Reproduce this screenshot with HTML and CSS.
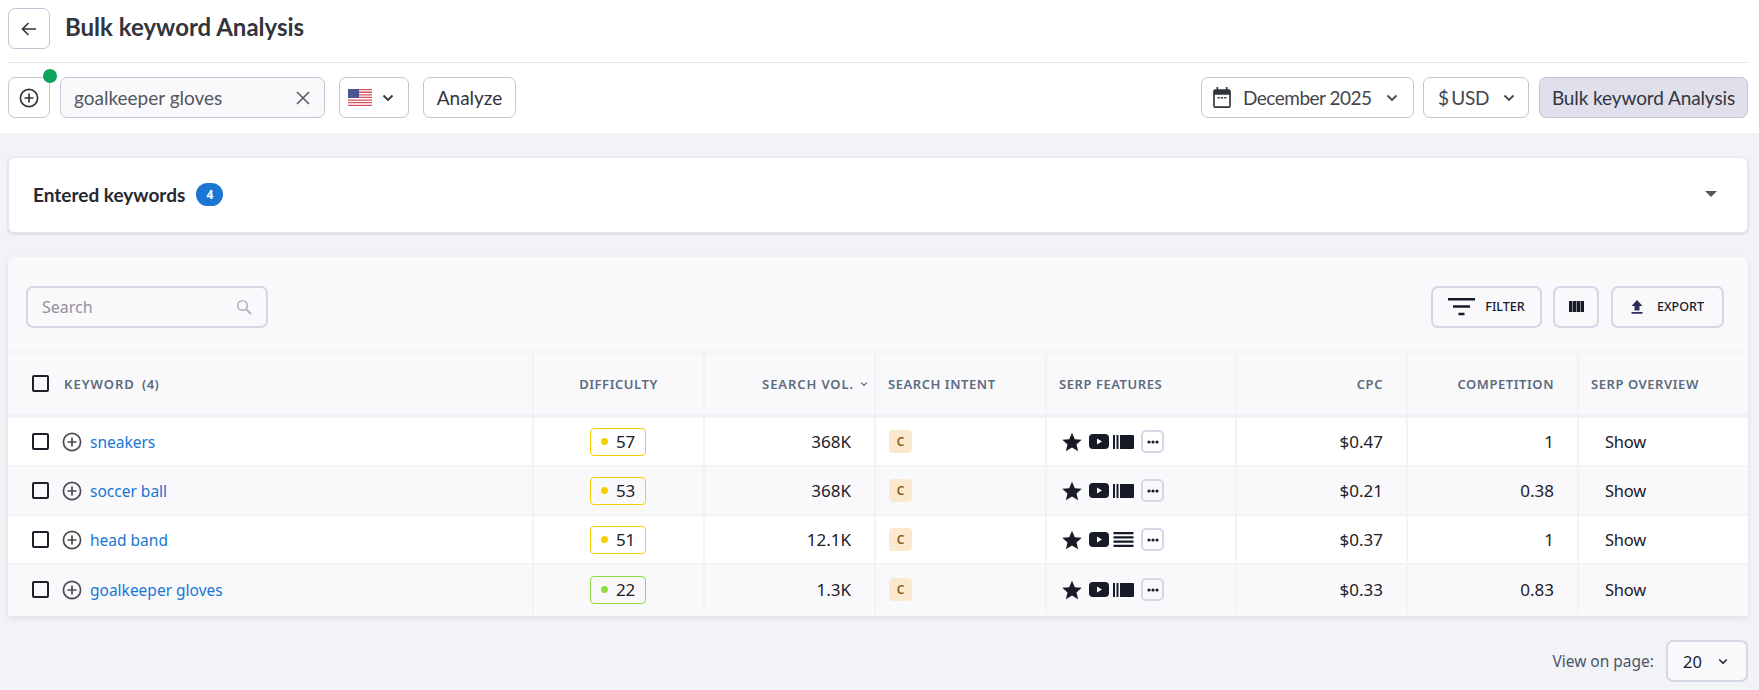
FILE: index.html
```html
<!DOCTYPE html>
<html lang="en">
<head>
  <meta charset="UTF-8">
  <title>Bulk keyword Analysis</title>
  <link rel="stylesheet" href="styles.css">
</head>
<body>
  <svg width="0" height="0" class="sprite">
    <symbol id="plus" viewBox="0 0 20 20"><circle cx="10" cy="10" r="8.6" fill="none" stroke="currentColor" stroke-width="1.7"/><path d="M10 5.500v9M5.500 10h9" stroke="currentColor" stroke-width="1.7"/></symbol>
    <symbol id="chev" viewBox="0 0 12 8"><path d="M1.500 1.500 6 6l4.500-4.500" fill="none" stroke="currentColor" stroke-width="1.8"/></symbol>
    <symbol id="star" viewBox="0 0 20 20"><path d="M10 .8l2.800 6.400 6.900.6-5.200 4.600 1.600 6.800L10 15.600 3.900 19.200l1.600-6.800L.3 7.800l6.900-.6z" fill="currentColor"/></symbol>
    <symbol id="video" viewBox="0 0 20 15"><path fill-rule="evenodd" d="M4 0h12a4 4 0 0 1 4 4v7a4 4 0 0 1-4 4H4a4 4 0 0 1-4-4V4a4 4 0 0 1 4-4zm4 4.500v6l5-3z" fill="currentColor"/></symbol>
    <symbol id="carousel" viewBox="0 0 21 14"><path d="M0 0h2v14H0zM3.500 0h2v14h-2zM7 0h13a1 1 0 0 1 1 1v12a1 1 0 0 1-1 1H7z" fill="currentColor"/></symbol>
    <symbol id="lines" viewBox="0 0 20 15"><path d="M0 0h20v2.200H0zM0 4.300h20v2.200H0zM0 8.600h20v2.200H0zM0 12.800h20V15H0z" fill="currentColor"/></symbol>
    <symbol id="dots" viewBox="0 0 12 4"><circle cx="2" cy="2" r="1.600" fill="currentColor"/><circle cx="6" cy="2" r="1.600" fill="currentColor"/><circle cx="10" cy="2" r="1.600" fill="currentColor"/></symbol>
  </svg>

  <header class="top">
    <div class="title-row">
      <button class="btn square">
        <svg width="18" height="18" viewBox="0 0 18 18"><path d="M16 9H3M8.500 3 2.500 9l6 6" fill="none" stroke="currentColor" stroke-width="1.6"/></svg>
      </button>
      <h1>Bulk keyword Analysis</h1>
    </div>
    <div class="tool-row">
      <div class="add-wrap">
        <button class="btn square"><svg width="20" height="20"><use href="#plus"/></svg></button>
        <span class="green-dot"></span>
      </div>
      <div class="keyword-input">
        <span>goalkeeper gloves</span>
        <svg width="14" height="14" viewBox="0 0 14 14"><path d="M1 1l12 12M13 1 1 13" stroke="currentColor" stroke-width="1.5"/></svg>
      </div>
      <button class="btn flag-btn">
        <svg class="flag" width="24" height="17" viewBox="0 0 24 17">
          <rect width="24" height="17" fill="#fff"/>
          <path d="M0 0h24v1.300H0zM0 2.600h24v1.300H0zM0 5.200h24v1.300H0zM0 7.800h24v1.300H0zM0 10.400h24v1.300H0zM0 13h24v1.300H0zM0 15.700h24V17H0z" fill="#d9505f"/>
          <rect width="11" height="9" fill="#4b5590"/>
        </svg>
        <svg class="chev" width="12" height="8"><use href="#chev"/></svg>
      </button>
      <button class="btn analyze">Analyze</button>
      <div class="spacer"></div>
      <button class="btn date-btn">
        <svg width="18" height="21" viewBox="0 0 16 19"><path fill-rule="evenodd" d="M3 0h1.500v2h7V0H13v2h1a2 2 0 0 1 2 2v13a2 2 0 0 1-2 2H2a2 2 0 0 1-2-2V4a2 2 0 0 1 2-2h1zM1.500 7v10c0 .3.2.5.5.500h12c.3 0 .5-.2.5-.5V7zM4 9h2v1.500H4zm3 0h2v1.500H7zm3 0h2v1.500h-2z" fill="#33353d"/></svg>
        <span>December 2025</span>
        <svg class="chev" width="12" height="8"><use href="#chev"/></svg>
      </button>
      <button class="btn usd-btn">
        <span>$ USD</span>
        <svg class="chev" width="12" height="8"><use href="#chev"/></svg>
      </button>
      <button class="btn primary">Bulk keyword Analysis</button>
    </div>
  </header>

  <main class="content">
    <section class="entered">
      <div class="entered-left">
        <strong>Entered keywords</strong>
        <span class="count">4</span>
      </div>
      <span class="caret"></span>
    </section>

    <section class="panel">
      <div class="panel-tools">
        <div class="search">
          <span>Search</span>
          <svg width="16" height="16" viewBox="0 0 16 16"><circle cx="6.500" cy="6.500" r="4.800" fill="none" stroke="currentColor" stroke-width="1.600"/><path d="M10 10l5 5" stroke="currentColor" stroke-width="2"/></svg>
        </div>
        <div class="panel-buttons">
          <button class="tool-btn filter-btn">
            <svg width="27" height="18" viewBox="0 0 27 18"><path d="M0 1.300h27M5 8.500h17M10.500 16h6" stroke="#171b28" stroke-width="2.600"/></svg>
            FILTER
          </button>
          <button class="tool-btn cols-btn">
            <svg width="15" height="11" viewBox="0 0 15 11"><path d="M0 0h3.400v11H0zM3.900 0h3.400v11H3.900zM7.800 0h3.400v11H7.800zM11.700 0H15v11h-3.300z" fill="#171b28"/></svg>
          </button>
          <button class="tool-btn export-btn">
            <svg width="12" height="14" viewBox="0 0 12 14"><path d="M6 0l5.500 6H8.500v4.500h-5V6H.5zM.5 12h11v1.800H.5z" fill="#2b3058"/></svg>
            EXPORT
          </button>
        </div>
      </div>

      <div class="row head">
        <div class="cell kw-cell"><span class="check"></span><span class="head-kw">KEYWORD</span><span class="head-num">(4)</span></div>
        <div class="cell center">DIFFICULTY</div>
        <div class="cell right vol-head">SEARCH VOL.<svg width="8" height="6" viewBox="0 0 12 8"><use href="#chev"/></svg></div>
        <div class="cell">SEARCH INTENT</div>
        <div class="cell">SERP FEATURES</div>
        <div class="cell right">CPC</div>
        <div class="cell right">COMPETITION</div>
        <div class="cell">SERP OVERVIEW</div>
      </div>

      <div class="row body">
        <div class="cell kw-cell"><span class="check"></span><svg class="row-plus" width="20" height="20"><use href="#plus"/></svg><a href="#">sneakers</a></div>
        <div class="cell center"><span class="diff yellow"><i></i>57</span></div>
        <div class="cell right">368K</div>
        <div class="cell"><span class="intent">C</span></div>
        <div class="cell feats">
          <svg class="star" width="20" height="20"><use href="#star"/></svg>
          <svg class="video" width="20" height="15"><use href="#video"/></svg>
          <svg width="21" height="14"><use href="#carousel"/></svg>
          <span class="more"><svg width="12" height="4"><use href="#dots"/></svg></span>
        </div>
        <div class="cell right">$0.47</div>
        <div class="cell right">1</div>
        <div class="cell show">Show</div>
      </div>

      <div class="row body">
        <div class="cell kw-cell"><span class="check"></span><svg class="row-plus" width="20" height="20"><use href="#plus"/></svg><a href="#">soccer ball</a></div>
        <div class="cell center"><span class="diff yellow"><i></i>53</span></div>
        <div class="cell right">368K</div>
        <div class="cell"><span class="intent">C</span></div>
        <div class="cell feats">
          <svg class="star" width="20" height="20"><use href="#star"/></svg>
          <svg class="video" width="20" height="15"><use href="#video"/></svg>
          <svg width="21" height="14"><use href="#carousel"/></svg>
          <span class="more"><svg width="12" height="4"><use href="#dots"/></svg></span>
        </div>
        <div class="cell right">$0.21</div>
        <div class="cell right">0.38</div>
        <div class="cell show">Show</div>
      </div>

      <div class="row body">
        <div class="cell kw-cell"><span class="check"></span><svg class="row-plus" width="20" height="20"><use href="#plus"/></svg><a href="#">head band</a></div>
        <div class="cell center"><span class="diff yellow"><i></i>51</span></div>
        <div class="cell right">12.1K</div>
        <div class="cell"><span class="intent">C</span></div>
        <div class="cell feats">
          <svg class="star" width="20" height="20"><use href="#star"/></svg>
          <svg class="video" width="20" height="15"><use href="#video"/></svg>
          <svg width="21" height="15"><use href="#lines"/></svg>
          <span class="more"><svg width="12" height="4"><use href="#dots"/></svg></span>
        </div>
        <div class="cell right">$0.37</div>
        <div class="cell right">1</div>
        <div class="cell show">Show</div>
      </div>

      <div class="row body">
        <div class="cell kw-cell"><span class="check"></span><svg class="row-plus" width="20" height="20"><use href="#plus"/></svg><a href="#">goalkeeper gloves</a></div>
        <div class="cell center"><span class="diff green"><i></i>22</span></div>
        <div class="cell right">1.3K</div>
        <div class="cell"><span class="intent">C</span></div>
        <div class="cell feats">
          <svg class="star" width="20" height="20"><use href="#star"/></svg>
          <svg class="video" width="20" height="15"><use href="#video"/></svg>
          <svg width="21" height="14"><use href="#carousel"/></svg>
          <span class="more"><svg width="12" height="4"><use href="#dots"/></svg></span>
        </div>
        <div class="cell right">$0.33</div>
        <div class="cell right">0.83</div>
        <div class="cell show">Show</div>
      </div>
    </section>

    <div class="pager">
      <span>View on page:</span>
      <button class="page-size">20<svg width="10" height="7" viewBox="0 0 12 8"><use href="#chev"/></svg></button>
    </div>
  </main>
</body>
</html>
```

FILE: styles.css
```css
* {
  box-sizing: border-box;
}

body {
  margin: 0;
  height: 690px;
  overflow: hidden;
  background: #f2f3f7;
  font-family: Lato, "Noto Sans", sans-serif;
  color: #33353d;
}

.sprite {
  display: block;
  height: 0;
}

button {
  font-family: inherit;
  cursor: pointer;
  white-space: nowrap;
}

.top {
  background: #fff;
  height: 133px;
  padding: 8px 11px 0 8px;
}

.title-row {
  display: flex;
  align-items: flex-start;
  gap: 15px;
  height: 55px;
  border-bottom: 1px solid #e2e2ee;
}

h1 {
  margin: 0;
  font-size: 24px;
  line-height: 38px;
  font-weight: 700;
  color: #33353d;
}

.btn {
  display: flex;
  align-items: center;
  flex: none;
  height: 41px;
  background: #fff;
  border: 1px solid #c5c5d6;
  border-radius: 7px;
  font-size: 19px;
  color: #33353d;
  padding: 0 14px;
}

.square {
  width: 42px;
  justify-content: center;
  padding: 0;
}

.tool-row {
  display: flex;
  align-items: center;
  margin-top: 14px;
}

.add-wrap {
  position: relative;
  margin-right: 10px;
}

.green-dot {
  position: absolute;
  top: -8px;
  right: -7px;
  width: 14px;
  height: 14px;
  border-radius: 50%;
  background: #0ea45f;
}

.keyword-input {
  display: flex;
  align-items: center;
  justify-content: space-between;
  width: 265px;
  height: 41px;
  padding: 0 14px 0 13px;
  background: #f9f9fc;
  border: 1px solid #c5c5d6;
  border-radius: 7px;
  font-size: 19px;
  color: #55565e;
}

.flag-btn {
  margin-left: 14px;
  width: 70px;
  padding: 0 0 0 8px;
  gap: 10px;
}

.analyze {
  margin-left: 14px;
  width: 93px;
  justify-content: center;
  padding: 0;
}

.spacer {
  flex: 1;
}

.date-btn {
  width: 213px;
  padding: 0 0 0 11px;
  gap: 12px;
  color: #44464e;
  letter-spacing: -0.5px;
}

.date-btn .chev {
  margin-left: 2px;
}

.usd-btn {
  margin-left: 9px;
  width: 106px;
  padding: 0 0 0 14px;
  gap: 14px;
  color: #44464e;
  word-spacing: -2px;
  letter-spacing: -0.3px;
}

.primary {
  margin-left: 10px;
  width: 209px;
  justify-content: center;
  padding: 0;
  background: #dfe0ec;
  letter-spacing: -0.1px;
}

.content {
  padding: 24px 11px 0 8px;
}

.entered {
  display: flex;
  align-items: center;
  justify-content: space-between;
  height: 76px;
  padding: 0 30px 2px 24px;
  background: #fff;
  border: 1px solid #e6e7f0;
  border-radius: 6px;
  box-shadow: 0 1px 3px rgba(30, 30, 60, 0.16);
}

.entered-left {
  display: flex;
  align-items: center;
  gap: 11px;
}

.entered strong {
  font-size: 19px;
  font-weight: 700;
  color: #26282f;
}

.count {
  width: 27px;
  height: 23px;
  border-radius: 12px;
  background: #1976d2;
  color: #fff;
  font: 700 12px/23px "Noto Sans", sans-serif;
  text-align: center;
}

.caret {
  width: 0;
  height: 0;
  border-left: 6px solid transparent;
  border-right: 6px solid transparent;
  border-top: 6px solid #55565e;
}

.panel {
  margin-top: 24px;
  background: #f9f9fc;
  border-radius: 6px 6px 0 0;
  box-shadow: 0 3px 6px rgba(30, 30, 60, 0.08);
  font-family: "Noto Sans", sans-serif;
  padding-bottom: 2px;
}

.panel-tools {
  display: flex;
  align-items: center;
  justify-content: space-between;
  height: 96px;
  padding: 5px 24px 0 18px;
  border-bottom: 2px solid #f2f3f7;
}

.search {
  display: flex;
  align-items: center;
  justify-content: space-between;
  width: 242px;
  height: 42px;
  padding: 0 14px;
  border: 2px solid #d5d7e6;
  border-radius: 7px;
  font-size: 16px;
  color: #8f919b;
}

.search svg {
  color: #b0b2c0;
}

.panel-buttons {
  display: flex;
  gap: 11px;
}

.tool-btn {
  display: flex;
  align-items: center;
  justify-content: center;
  height: 42px;
  background: #f9f9fc;
  border: 2px solid #d5d7e6;
  border-radius: 7px;
  font-family: "Noto Sans", sans-serif;
  font-size: 12.500px;
  font-weight: 500;
  color: #171b28;
}

.filter-btn {
  width: 111px;
  gap: 10px;
}

.cols-btn {
  width: 46px;
}

.export-btn {
  width: 113px;
  margin-left: 1px;
  gap: 14px;
}

.row {
  display: grid;
  grid-template-columns: 526px 171px 171px 171px 190px 171px 171px 169px;
}

.cell {
  display: flex;
  align-items: center;
  padding: 0 12px;
  border-right: 2px solid #f2f3f7;
  font-size: 16.500px;
  letter-spacing: -0.2px;
  color: #1d2029;
  min-width: 0;
}

.cell:last-child {
  border-right: 0;
}

.center {
  justify-content: center;
}

.right {
  justify-content: flex-end;
  padding-right: 23px;
  font-size: 17px;
  letter-spacing: 0;
}

.head {
  height: 65px;
  border-bottom: 4px solid #f2f3f7;
}

.head .cell {
  font-size: 13px;
  font-weight: 600;
  letter-spacing: 0.55px;
  color: #5b6b7c;
  white-space: nowrap;
}

.head .vol-head {
  padding-right: 6px;
  gap: 6px;
  letter-spacing: 0.9px;
}

.check {
  width: 17px;
  height: 17px;
  border: 2px solid #1d2029;
  border-radius: 2px;
  flex: none;
}

.kw-cell {
  padding-left: 24px;
}

.head-kw {
  margin-left: 15px;
  letter-spacing: 1px;
}

.head-num {
  margin-left: 7px;
}

.body {
  height: 49px;
  border-bottom: 2px solid #f2f3f7;
}

.body:nth-child(odd) {
  background: #fff;
}

.body:last-child {
  border-bottom: 0;
}

.row-plus {
  margin-left: 13px;
  color: #4a4b53;
}

.kw-cell a {
  margin-left: 8px;
  color: #1976d2;
  text-decoration: none;
  font-size: 15.500px;
  letter-spacing: 0;
}

.diff {
  display: flex;
  align-items: center;
  width: 56px;
  height: 28px;
  margin-right: 1px;
  padding-left: 10px;
  border-radius: 4px;
  gap: 8px;
  font-size: 17px;
}

.diff i {
  width: 7px;
  height: 7px;
  border-radius: 50%;
}

.yellow {
  border: 1px solid #f5cf00;
}

.yellow i {
  background: #f5cf00;
}

.green {
  border: 1px solid #8fdc3f;
}

.green i {
  background: #8fdc3f;
}

.intent {
  width: 23px;
  height: 23px;
  margin-left: 1px;
  border-radius: 4px;
  background: #fae9cf;
  color: #8a5a14;
  font-size: 12px;
  font-weight: 600;
  line-height: 23px;
  text-align: center;
}

.feats {
  gap: 3px;
  padding-left: 15px;
}

.feats svg {
  color: #171b28;
  flex: none;
}

.feats .star {
  margin-right: 4px;
}

.feats .video {
  margin-right: 1px;
}

.more {
  display: flex;
  align-items: center;
  justify-content: center;
  width: 23px;
  height: 23px;
  margin-left: 4px;
  border: 2px solid #d5d7e6;
  border-radius: 5px;
}

.show {
  padding-left: 26px;
}

.pager {
  display: flex;
  align-items: center;
  justify-content: flex-end;
  gap: 12px;
  margin-top: 24px;
  font-family: "Noto Sans", sans-serif;
  font-size: 15.500px;
  color: #4c5568;
}

.page-size {
  display: flex;
  align-items: center;
  justify-content: space-between;
  width: 82px;
  height: 42px;
  padding: 0 18px 0 15px;
  background: #f9f9fc;
  border: 2px solid #d5d7e6;
  border-radius: 7px;
  font-family: "Noto Sans", sans-serif;
  font-size: 16.500px;
  color: #171b28;
}
```
